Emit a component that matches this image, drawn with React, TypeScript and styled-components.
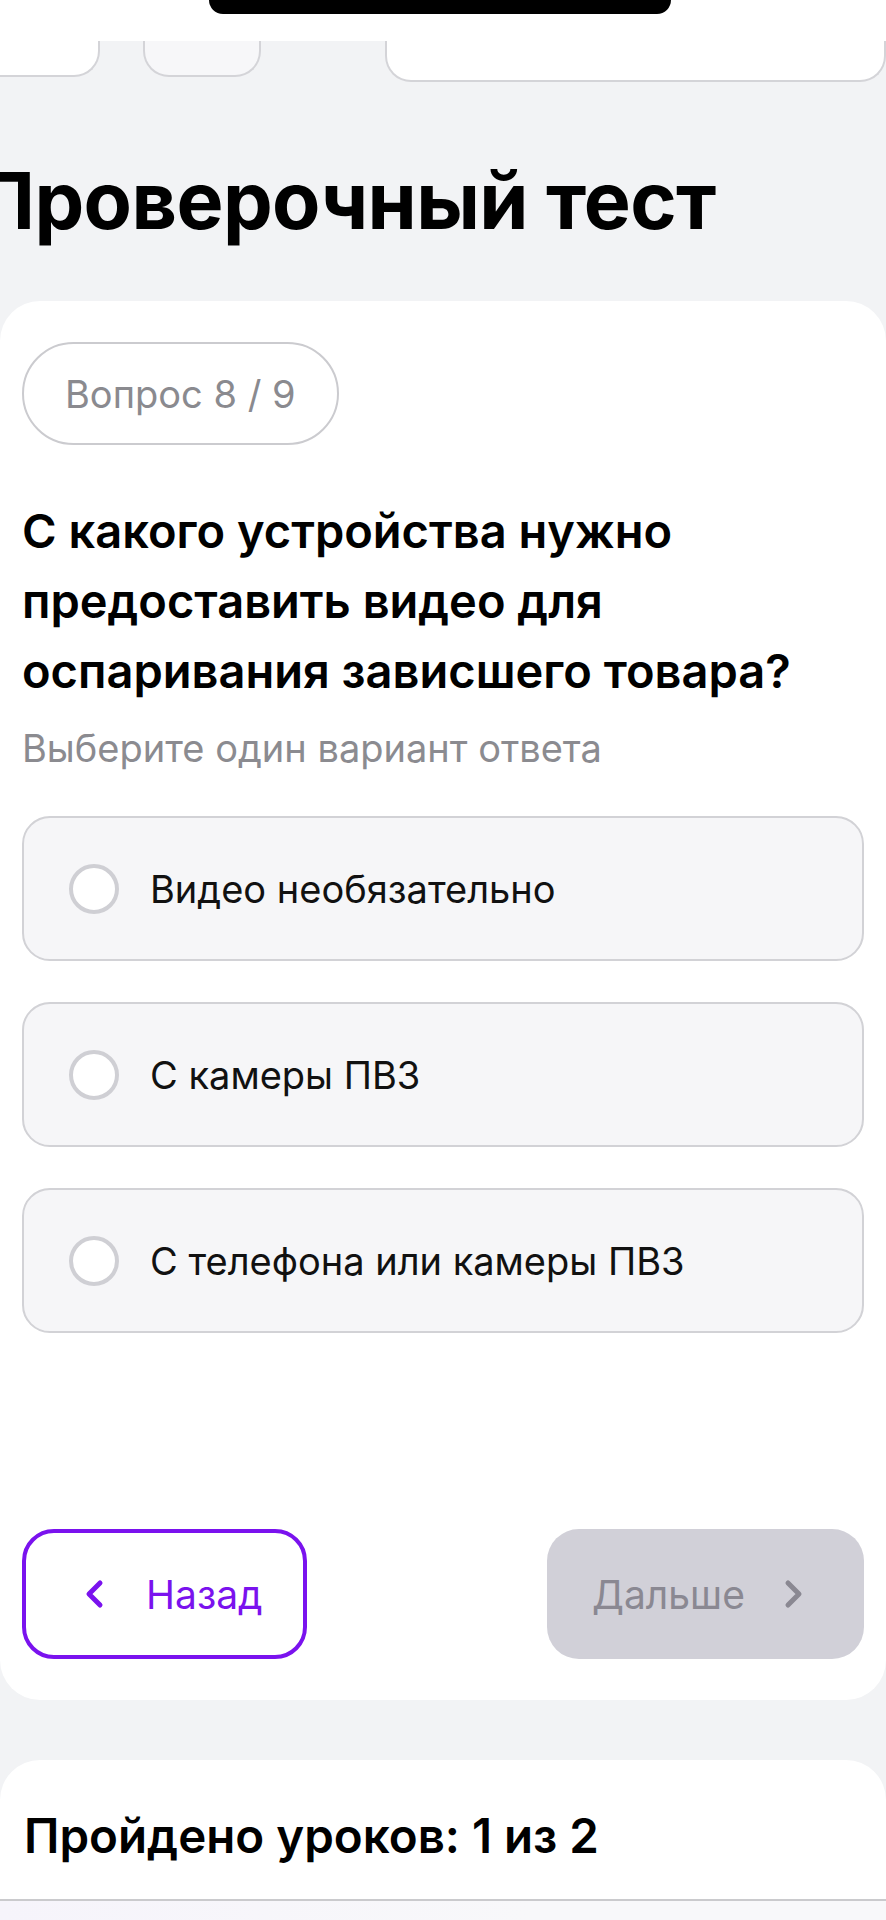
import styled, { createGlobalStyle } from "styled-components";

const GlobalStyle = createGlobalStyle`
  html, body {
    margin: 0;
    padding: 0;
    background: #f2f3f5;
  }
  body {
    font-family: Inter, "Noto Sans", Roboto, sans-serif;
    color: #000;
    overflow-x: hidden;
  }
  * {
    box-sizing: border-box;
  }
`;

const options = ["Видео необязательно", "С камеры ПВЗ", "С телефона или камеры ПВЗ"];

const ChevronIcon = ({ dir, color }: { dir: "left" | "right"; color: string }) => (
  <svg width="20" height="30" viewBox="0 0 20 30" fill="none">
    <polyline
      points={dir === "left" ? "15,4 4,15 15,26" : "5,4 16,15 5,26"}
      stroke={color}
      strokeWidth="5"
      strokeLinecap="round"
      strokeLinejoin="round"
    />
  </svg>
);

const App = () => {
  return (
    <>
      <GlobalStyle />
      <Page>
        <StatusBar>
          <Notch />
        </StatusBar>
        <TabsRow>
          <Tab $width={100} $edge="left" />
          <Tab $width={118} $muted />
          <Tab $width={501} $tall />
        </TabsRow>

        <Title>Проверочный тест</Title>

        <QuizCard>
          <Counter>Вопрос 8 / 9</Counter>
          <Question>С какого устройства нужно предоставить видео для оспаривания зависшего товара?</Question>
          <Hint>Выберите один вариант ответа</Hint>

          <OptionList>
            {options.map((text) => (
              <Option key={text}>
                <Radio />
                <OptionText>{text}</OptionText>
              </Option>
            ))}
          </OptionList>

          <Actions>
            <BackButton>
              <ChevronIcon dir="left" color="#7a12ee" />
              <span>Назад</span>
            </BackButton>
            <NextButton disabled>
              <span>Дальше</span>
              <ChevronIcon dir="right" color="#8a8892" />
            </NextButton>
          </Actions>
        </QuizCard>

        <ProgressCard>
          <ProgressTitle>Пройдено уроков: 1 из 2</ProgressTitle>
        </ProgressCard>
        <BottomStrip />
      </Page>
    </>
  );
};

export default App;

const Page = styled.div`
  width: 886px;
  min-height: 1920px;
  background: #f2f3f5;
  display: flex;
  flex-direction: column;
`;

const StatusBar = styled.div`
  height: 41px;
  background: #fff;
  display: flex;
  justify-content: center;
  padding-right: 7px;
`;

const Notch = styled.div`
  width: 462px;
  height: 14px;
  background: #000;
  border-radius: 0 0 32px 32px;
`;

const TabsRow = styled.div`
  display: flex;
  align-items: flex-start;
  gap: 43px;
  height: 41px;

  & > :nth-child(3) {
    margin-left: 81px;
  }
`;

const Tab = styled.div<{ $width: number; $muted?: boolean; $tall?: boolean; $edge?: "left" }>`
  width: ${({ $width }) => $width}px;
  height: ${({ $tall }) => ($tall ? 41 : 36)}px;
  background: ${({ $muted }) => ($muted ? "#f7f7f9" : "#fff")};
  border: 2px solid #d4d4d8;
  border-top: none;
  border-left: ${({ $edge }) => ($edge === "left" ? "none" : "2px solid #d4d4d8")};
  border-radius: ${({ $edge }) => ($edge === "left" ? "0 0 26px 0" : "0 0 26px 26px")};
`;

const Title = styled.h1`
  margin: 73px 0 56px -24px;
  font-size: 79px;
  line-height: 90px;
  font-weight: 700;
  letter-spacing: -0.6px;
  color: #000;
  white-space: nowrap;
`;

const QuizCard = styled.section`
  background: #fff;
  border-radius: 40px;
  padding: 41px 22px 41px;
  display: flex;
  flex-direction: column;
`;

const Counter = styled.div`
  align-self: flex-start;
  height: 103px;
  padding: 0 41px;
  display: flex;
  align-items: center;
  border: 2px solid #cbcbcf;
  border-radius: 52px;
  font-size: 38px;
  color: #8a8a8f;
`;

const Question = styled.h2`
  margin: 51px 0 0;
  font-size: 47px;
  line-height: 70px;
  font-weight: 600;
  color: #000;
`;

const Hint = styled.p`
  margin: 18px 0 0;
  font-size: 38px;
  line-height: 48px;
  color: #8b8b90;
`;

const OptionList = styled.div`
  margin-top: 44px;
  display: flex;
  flex-direction: column;
  gap: 41px;
`;

const Option = styled.label`
  height: 145px;
  display: flex;
  align-items: center;
  gap: 31px;
  padding-left: 45px;
  background: #f6f6f8;
  border: 2px solid #d2d2d6;
  border-radius: 28px;
`;

const Radio = styled.span`
  width: 50px;
  height: 50px;
  flex-shrink: 0;
  border-radius: 50%;
  border: 4px solid #cfcfd4;
  background: #fff;
`;

const OptionText = styled.span`
  font-size: 38px;
  color: #111;
`;

const Actions = styled.div`
  margin-top: 196px;
  display: flex;
  justify-content: space-between;
`;

const ButtonBase = styled.button`
  height: 130px;
  border-radius: 32px;
  display: flex;
  align-items: center;
  font-family: inherit;
  font-size: 39px;
  padding: 0;
`;

const BackButton = styled(ButtonBase)`
  width: 285px;
  padding-left: 59px;
  gap: 41px;
  background: #fff;
  border: 4px solid #7a12ee;
  color: #7a12ee;
`;

const NextButton = styled(ButtonBase)`
  width: 317px;
  padding-left: 45px;
  gap: 38px;
  background: #d1d0d8;
  border: none;
  color: #8a8892;
`;

const ProgressCard = styled.section`
  margin-top: 60px;
  background: #fff;
  border-radius: 40px 40px 0 0;
  padding: 47px 24px 34px;
  border-bottom: 2px solid #cacacd;
`;

const ProgressTitle = styled.h3`
  margin: 0;
  font-size: 47.5px;
  line-height: 58px;
  font-weight: 600;
  color: #000;
`;

const BottomStrip = styled.div`
  flex: 1;
  background: linear-gradient(90deg, #f6f4fb 0%, #f8f8fa 60%);
`;
